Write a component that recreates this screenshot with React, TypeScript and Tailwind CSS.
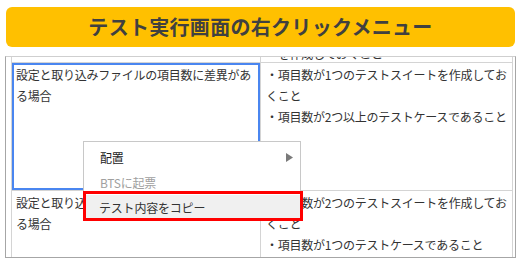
export default function App() {
  return (
    <div className="relative w-[521px] h-[264px] overflow-hidden bg-white text-[#333333] font-['Noto_Sans_CJK_JP',sans-serif]">
      {/* タイトル帯 */}
      <div className="h-[56px] px-[6px] pt-[7px]">
        <div className="h-[40px] rounded-[6px] bg-[#ffc000] flex items-center justify-center">
          <span className="text-[20px] font-bold tracking-[0.3px] text-[#404040] leading-none">
            テスト実行画面の右クリックメニュー
          </span>
        </div>
      </div>

      {/* テーブル */}
      <div className="ml-[5px] w-[511px] h-[202px] border-t border-t-[#cfcfcf] border-x border-b border-[#a6a6a6] flex">
        <div className="w-[5px] shrink-0" />
        <div className="w-[502px] border-x border-[#d4d4d4] flex flex-col text-[12px] tracking-[-0.25px] leading-[21px] whitespace-nowrap">
          <div className="h-[6px] shrink-0 flex overflow-hidden border-b border-[#d4d4d4]">
            <div className="w-[249px] border-r border-[#d4d4d4]" />
            <div className="flex-1 px-[5px]">
              <div className="-mt-[14px]">・を作成しておくこと</div>
            </div>
          </div>
          <div className="h-[128px] shrink-0 flex border-b border-[#d4d4d4]">
            <div className="relative w-[249px] border-r border-[#d4d4d4] pl-[4px] pt-[1px]">
              <div>設定と取り込みファイルの項目数に差異があ</div>
              <div>る場合</div>
              <div className="absolute inset-0 border-2 border-[#4a86f0]" />
            </div>
            <div className="flex-1 px-[5px] pt-[1px]">
              <div>・項目数が1つのテストスイートを作成してお</div>
              <div>くこと</div>
              <div>・項目数が2つ以上のテストケースであること</div>
            </div>
          </div>
          <div className="flex-1 flex">
            <div className="w-[249px] border-r border-[#d4d4d4] pl-[4px] pt-[1px]">
              <div>設定と取り込みファイルの項目数に差異があ</div>
              <div>る場合</div>
            </div>
            <div className="flex-1 px-[5px] pt-[1px]">
              <div>・項目数が2つのテストスイートを作成してお</div>
              <div>くこと</div>
              <div>・項目数が1つのテストケースであること</div>
            </div>
          </div>
        </div>
        <div className="w-[2px] shrink-0" />
      </div>

      {/* 右クリックメニュー */}
      <div className="absolute left-[83px] top-[141px] w-[218px] bg-white border border-[#c8c8c8] pt-[3px] text-[12px] tracking-[-0.2px] whitespace-nowrap">
        <div className="h-[25px] flex items-center justify-between pl-[16px] pr-[7px] text-[#222222]">
          <span>配置</span>
          <svg width="7" height="9" viewBox="0 0 7 9">
            <polygon points="0,0 7,4.5 0,9" fill="#7a7a7a" />
          </svg>
        </div>
        <div className="h-[25px] flex items-center pl-[16px] text-[#a0a0a0]">BTSに起票</div>
        <div className="relative h-[25px] flex items-center pl-[15px] bg-[#f0f0f0] text-[#333333]">
          <span>テスト内容をコピー</span>
          <div className="absolute -left-[1px] -right-[3px] -top-[4px] bottom-[-1px] border-[3px] border-[#ff0000]" />
        </div>
      </div>
    </div>
  )
}
